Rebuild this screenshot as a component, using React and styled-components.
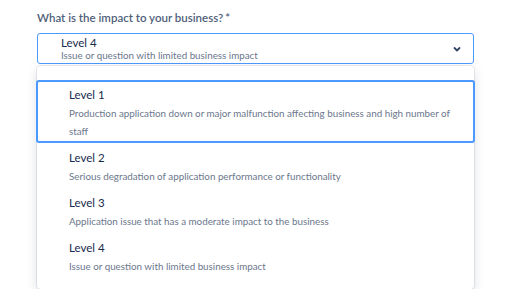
import styled, { createGlobalStyle } from "styled-components";

const GlobalStyle = createGlobalStyle`
  body {
    margin: 0;
    background: #ffffff;
    font-family: Lato, "Open Sans", sans-serif;
  }
`;

const options = [
  {
    title: "Level 1",
    desc: "Production application down or major malfunction affecting business and high number of staff",
  },
  { title: "Level 2", desc: "Serious degradation of application performance or functionality" },
  { title: "Level 3", desc: "Application issue that has a moderate impact to the business" },
  { title: "Level 4", desc: "Issue or question with limited business impact" },
];

const ChevronDown = () => (
  <svg width="10" height="10" viewBox="0 0 10 10">
    <path d="M2.5 4 L5 6.5 L7.5 4" fill="none" stroke="#344563" strokeWidth="1.8" strokeLinecap="round" strokeLinejoin="round" />
  </svg>
);

const App = () => {
  return (
    <Page>
      <GlobalStyle />
      <Field>
        <Label>
          What is the impact to your business?<Required>*</Required>
        </Label>
        <Select>
          <SelectValue>
            <ValueTitle>Level 4</ValueTitle>
            <ValueDesc>Issue or question with limited business impact</ValueDesc>
          </SelectValue>
          <ChevronDown />
        </Select>
        <Menu>
          {options.map((o, i) => (
            <Option key={o.title} $active={i === 0}>
              <OptionTitle>{o.title}</OptionTitle>
              <OptionDesc>{o.desc}</OptionDesc>
            </Option>
          ))}
        </Menu>
      </Field>
    </Page>
  );
};

export default App;

const Page = styled.div`
  padding: 10px 40px 0 37px;
  width: 514px;
  box-sizing: border-box;
`;

const Field = styled.div`
  display: flex;
  flex-direction: column;
  width: 437px;
`;

const Label = styled.div`
  font-size: 11.5px;
  font-weight: 600;
  color: #505f79;
  line-height: 16px;
  margin-bottom: 7px;
`;

const Required = styled.span`
  margin-left: 2px;
`;

const Select = styled.div`
  display: flex;
  align-items: center;
  justify-content: space-between;
  height: 31px;
  box-sizing: border-box;
  border: 1px solid #4c9aff;
  border-radius: 3px;
  padding: 0 11px 0 23px;
`;

const SelectValue = styled.div`
  display: flex;
  flex-direction: column;
`;

const ValueTitle = styled.div`
  font-size: 11.5px;
  line-height: 13px;
  color: #172b4d;
`;

const ValueDesc = styled.div`
  font-size: 9.8px;
  line-height: 12px;
  color: #6b778c;
`;

const Menu = styled.div`
  margin-top: 2px;
  padding: 14px 0 11px;
  border-radius: 4px;
  background: #ffffff;
  box-shadow: 0 0 0 1px rgba(9, 30, 66, 0.08), 0 4px 11px rgba(9, 30, 66, 0.15);
`;

const Option = styled.div`
  padding: 4px 19px 1px 31px;
  border: 2px solid ${(p) => (p.$active ? "#4c9aff" : "transparent")};
  border-radius: 3px;
  margin: 0 -1px;
`;

const OptionTitle = styled.div`
  font-size: 11.5px;
  line-height: 18px;
  color: #172b4d;
`;

const OptionDesc = styled.div`
  font-size: 9.8px;
  line-height: 18px;
  color: #6b778c;
`;
